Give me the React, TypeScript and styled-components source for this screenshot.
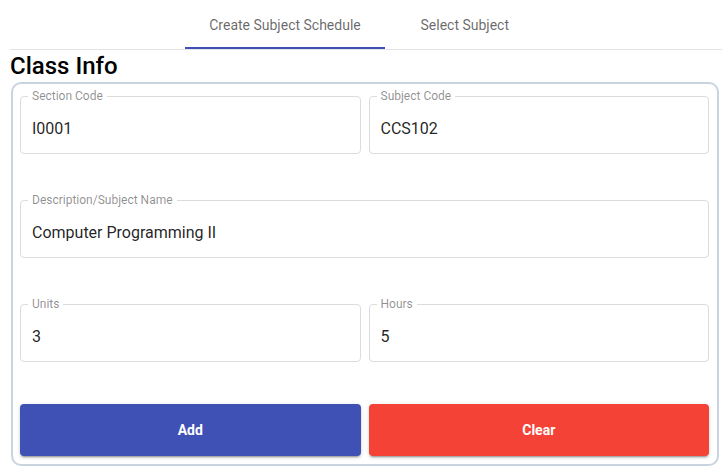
import React from "react";
import styled, { createGlobalStyle } from "styled-components";

const Global = createGlobalStyle`
  html, body { margin: 0; padding: 0; background: #fff; }
  body { font-family: Roboto, "Liberation Sans", Arial, sans-serif; }
  * { box-sizing: border-box; }
`;

const Page = styled.div`
  padding-left: 10px;
  width: 722px;
`;

const TabBar = styled.div`
  display: flex;
  justify-content: center;
  border-bottom: 1px solid #e2e4e8;
  height: 50px;
  padding-right: 2px;
`;

const Tab = styled.button<{ $active?: boolean }>`
  position: relative;
  min-width: 160px;
  height: 49px;
  padding: 0 24px;
  border: none;
  background: transparent;
  font-family: Roboto, "Liberation Sans", Arial, sans-serif;
  font-size: 14px;
  font-weight: 400;
  color: rgba(0, 0, 0, 0.6);
  cursor: pointer;

  &::after {
    content: "";
    position: absolute;
    left: 0;
    right: 0;
    bottom: 0;
    height: 2px;
    background: ${(p) => (p.$active ? "#3f51b5" : "transparent")};
  }
`;

const Title = styled.h2`
  margin: 1px 0 0;
  font-family: Roboto, "Liberation Sans", Arial, sans-serif;
  font-size: 24px;
  font-weight: 500;
  line-height: 30px;
  color: #000;
`;

const Card = styled.div`
  margin: 1px 3px 0 1px;
  border: 2px solid #c9d4e0;
  border-radius: 10px;
  padding: 5px 8px 8px 7px;
  display: grid;
  grid-template-columns: 1fr 1fr;
  column-gap: 8px;
  row-gap: 39px;
`;

const Field = styled.fieldset<{ $full?: boolean }>`
  margin: 0;
  padding: 0 7px;
  border: 1px solid #dcdcdc;
  border-radius: 4px;
  min-width: 0;
  grid-column: ${(p) => (p.$full ? "1 / span 2" : "auto")};
`;

const Legend = styled.legend`
  padding: 0 4px;
  font-size: 12px;
  line-height: 14px;
  color: rgba(0, 0, 0, 0.45);
`;

const Input = styled.input`
  display: block;
  width: 100%;
  border: none;
  outline: none;
  background: transparent;
  padding: 16px 4px 15px;
  font-family: Roboto, "Liberation Sans", Arial, sans-serif;
  font-size: 16px;
  line-height: 19px;
  height: 50px;
  color: rgba(0, 0, 0, 0.87);
`;

const Button = styled.button<{ $color: string }>`
  margin-top: 3px;
  height: 52px;
  border: none;
  border-radius: 4px;
  background: ${(p) => p.$color};
  color: #fff;
  font-family: Roboto, "Liberation Sans", Arial, sans-serif;
  font-size: 14px;
  font-weight: 700;
  cursor: pointer;
  box-shadow: 0 3px 1px -2px rgba(0, 0, 0, 0.2), 0 2px 2px 0 rgba(0, 0, 0, 0.14),
    0 1px 5px 0 rgba(0, 0, 0, 0.12);
`;

type F = { label: string; value: string; full?: boolean };

const fields: F[] = [
  { label: "Section Code", value: "I0001" },
  { label: "Subject Code", value: "CCS102" },
  { label: "Description/Subject Name", value: "Computer Programming II", full: true },
  { label: "Units", value: "3" },
  { label: "Hours", value: "5" },
];

export default function App() {
  return (
    <Page>
      <Global />
      <TabBar>
        <Tab $active>Create Subject Schedule</Tab>
        <Tab>Select Subject</Tab>
      </TabBar>
      <Title>Class Info</Title>
      <Card>
        {fields.map((f) => (
          <Field key={f.label} $full={f.full}>
            <Legend>{f.label}</Legend>
            <Input defaultValue={f.value} />
          </Field>
        ))}
        <Button $color="#3f51b5">Add</Button>
        <Button $color="#f44336">Clear</Button>
      </Card>
    </Page>
  );
}
